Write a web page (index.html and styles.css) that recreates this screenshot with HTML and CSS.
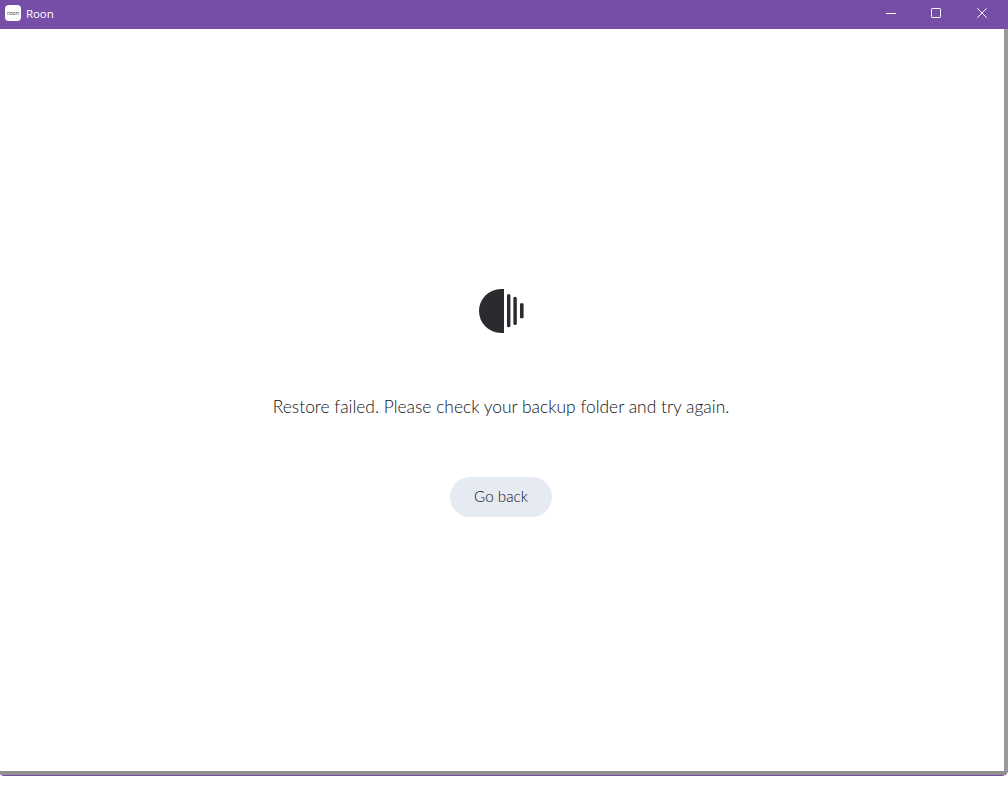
FILE: index.html
```html
<!DOCTYPE html>
<html lang="en">
<head>
<meta charset="utf-8">
<title>Roon</title>
<link rel="stylesheet" href="styles.css">
</head>
<body>
<div class="window">
  <header class="titlebar">
    <div class="app">
      <span class="app-icon"><span class="app-icon-text">roon</span></span>
      <span class="app-name">Roon</span>
    </div>
    <div class="controls">
      <span class="control">
        <svg width="11" height="11" viewBox="0 0 11 11"><path d="M0 5.5H10" stroke="#fff" fill="none"/></svg>
      </span>
      <span class="control">
        <svg width="11" height="11" viewBox="0 0 11 11"><rect x="0.5" y="0.5" width="9" height="9" rx="0.8" stroke="#fff" fill="none"/></svg>
      </span>
      <span class="control control-close">
        <svg width="11" height="11" viewBox="0 0 11 11"><path d="M0.3 0.3L9.7 9.7M9.7 0.3L0.3 9.7" stroke="#fff" fill="none"/></svg>
      </span>
    </div>
  </header>
  <div class="client">
    <main class="content">
      <svg class="logo" width="45" height="44" viewBox="0 0 45 44">
        <path d="M22 0A22 22 0 0 0 22 44H25V0Z" fill="#2a2a2f"/>
        <rect x="28" y="5" width="3.4" height="33.3" rx="1.6" fill="#2a2a2f"/>
        <rect x="34.4" y="7.7" width="3.4" height="28.3" rx="1.6" fill="#2a2a2f"/>
        <rect x="41" y="14.3" width="3.6" height="15" rx="0.8" fill="#2a2a2f"/>
      </svg>
      <p class="message">Restore failed. Please check your backup folder and try again.</p>
      <button class="back" type="button">Go back</button>
    </main>
    <div class="edge"></div>
  </div>
  <div class="bottom"></div>
</div>
</body>
</html>
```
FILE: styles.css
```css
* { box-sizing: border-box; }
html, body { margin: 0; padding: 0; background: #fff; }
body { height: 798px; overflow: hidden; font-family: "Lato", sans-serif; }
.window {
  width: 1008px;
  height: 776px;
  display: flex;
  flex-direction: column;
  background: #764ea7;
  border-bottom-right-radius: 6px;
  border-bottom-left-radius: 4px;
  overflow: hidden;
  padding-bottom: 1px;
}
.titlebar {
  height: 29px;
  flex: none;
  background: #764ea7;
  display: flex;
  align-items: center;
  justify-content: space-between;
  color: #fff;
  padding-bottom: 2px;
}
.app { display: flex; align-items: center; padding-left: 5px; padding-bottom: 1px; gap: 5px; }
.app-icon {
  width: 16px;
  height: 16px;
  border-radius: 4px;
  background: #fff;
  display: flex;
  align-items: center;
  justify-content: center;
}
.app-icon-text { font-size: 6px; color: #555; line-height: 1; }
.app-name { font: 11.5px "Open Sans", sans-serif; letter-spacing: -0.1px; }
.controls { display: flex; padding-right: 3px; }
.control { width: 45px; height: 27px; display: flex; align-items: center; justify-content: center; }
.control-close { margin-left: 1px; }
.client { flex: 1; display: flex; min-height: 0; }
.content {
  flex: 1;
  background: #fff;
  display: flex;
  flex-direction: column;
  align-items: center;
  padding-top: 260px;
  padding-right: 2px;
}
.edge { width: 4px; flex: none; background: #9a9a9a; }
.bottom { height: 4px; flex: none; background: #8f8f8f; }
.logo { display: block; }
.message {
  margin: 62px 0 0;
  font-size: 17.4px;
  font-weight: 300;
  line-height: 24px;
  color: #111114;
}
.back {
  margin-top: 58px;
  width: 102px;
  height: 40px;
  border: 0;
  border-radius: 20px;
  background: #e6eaf3;
  color: #111114;
  font: 300 15.2px "Lato", sans-serif;
  padding: 0 0 2px;
}
```
